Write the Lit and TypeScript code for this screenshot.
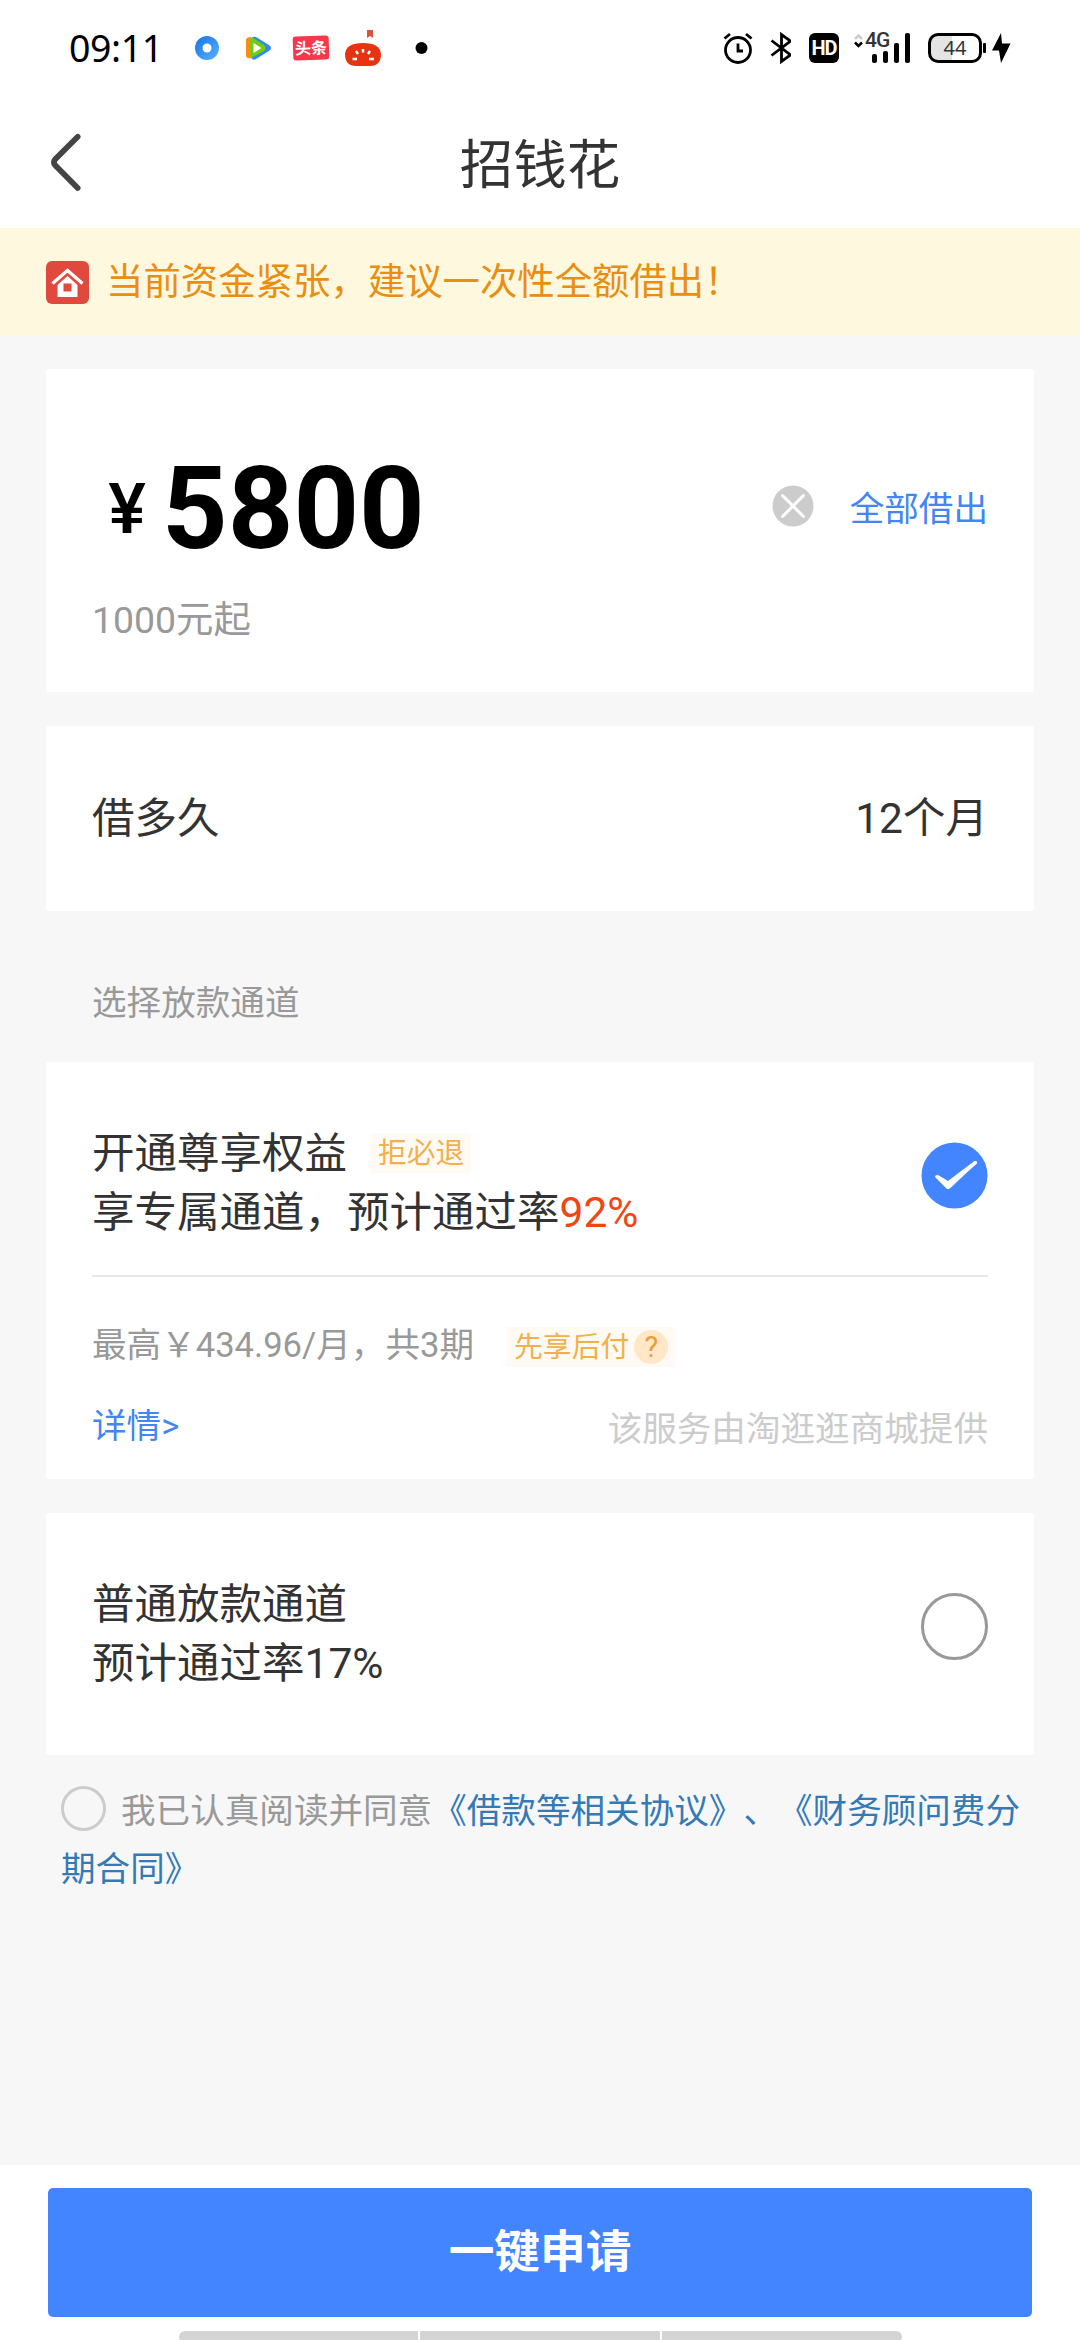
import { LitElement, html, css } from "lit";
import { customElement } from "lit/decorators.js";

@customElement("status-bar")
class StatusBar extends LitElement {
  static styles = css`
    :host { display: flex; align-items: center; height: 96px; padding: 0 68px 0 69px; justify-content: space-between; box-sizing: border-box; }
    .side { display: flex; align-items: center; }
    .time { width: 120px; font: 400 37.500px/46px "Noto Sans", sans-serif; letter-spacing: -0.400px; color: #000; }
    .play { margin-left: 6px; }
    .news { box-sizing: border-box; width: 36px; height: 24px; margin: 0 14px 0 20px; border-radius: 3px; background: #f6384d; color: #fff; font: 700 16px/22px "Noto Sans CJK SC", sans-serif; text-align: center; transform: rotate(-2deg); }
    svg { display: block; }
    .hd { width: 30px; height: 30px; border-radius: 6px; background: #000; color: #fff; font: 700 20px/31px Roboto, sans-serif; text-align: center; letter-spacing: -1px; margin: 0 14px 0 18px; }
    .signal { position: relative; width: 58px; height: 32px; }
    .net { position: absolute; left: 12px; top: -2px; font: 500 21px/20px Roboto, sans-serif; letter-spacing: -1px; }
    .battery { box-sizing: border-box; width: 54px; height: 30px; margin-left: 17px; border: 3px solid #000; border-radius: 10px; background: linear-gradient(90deg, #e4e4e4 44%, #fff 44%); font: 400 20px/24px "Noto Sans", sans-serif; text-align: center; }
  `;
  render() {
    return html`
      <div class="side">
        <div class="time">09:11</div>
        <svg width="36" height="30" viewBox="0 0 36 30">
          <defs><linearGradient id="a" x1="0" y1="0" x2="1" y2="1"><stop offset="0" stop-color="#1673e8" /><stop offset="1" stop-color="#58b3fb" /></linearGradient></defs>
          <circle cx="18" cy="15" r="12" fill="url(#a)" /><circle cx="18" cy="15" r="4.5" fill="#fff" />
        </svg>
        <svg class="play" width="42" height="30" viewBox="0 0 42 30">
          <path d="M25 4 L38 12 Q42 15 38 18 L25 26 Q21 28 20 24 V6 Q21 3 25 4Z" fill="#2f8fe8" />
          <path d="M20 4 V25 Q15 26 15 22 V7 Q15 4 20 4Z" fill="#ff8a17" />
          <path d="M19 7 Q19 4 22 5 L33 12 Q36 15 33 18 L22 24 Q19 25 19 22Z" fill="#74cc0c" />
          <path d="M22.500 10 L30.500 15 L22.500 20Z" fill="#fff" />
        </svg>
        <div class="news">头条</div>
        <svg width="40" height="40" viewBox="0 0 40 40">
          <path d="M24 2 H30 V10 L27 8 L24 10Z" fill="#db5439" />
          <path d="M2 26 Q3 15 20 15 Q37 15 38 26 Q38 38 27 38 H13 Q2 38 2 26Z" fill="#e5340f" />
          <g stroke="#fff" stroke-width="2.500"><path d="M20 21V24.500M13 23L15 26M27 23L25 26M9.500 31H14M26 31H31" /></g>
        </svg>
        <svg width="76" height="20" viewBox="0 0 76 20"><circle cx="38.500" cy="10" r="6" /></svg>
      </div>
      <div class="side">
        <svg width="30" height="32" viewBox="0 0 30 32" fill="none" stroke="#000" stroke-width="2.800">
          <circle cx="15" cy="18" r="12.500" /><path d="M15 11.500V19H20" /><path d="M1.500 6.500L7 2M28.500 6.500L23 2" />
        </svg>
        <svg width="38" height="32" viewBox="0 0 38 32" fill="none" stroke="#000" stroke-width="2.800">
          <path d="M18.500 8.500L37.500 23L28.500 29.500V2.500L37.500 9L18.500 23.500" />
        </svg>
        <div class="hd">HD</div>
        <div class="signal">
          <svg width="58" height="32" viewBox="0 0 58 32">
            <path d="M2 7L5.500 3.500L9 7" fill="none" stroke="#ccc" stroke-width="2.500" /><path d="M2 10.500L5.500 14L9 10.500" fill="none" stroke="#000" stroke-width="2.500" />
            <rect x="19" y="22" width="5" height="9" rx="2" /><rect x="30" y="19" width="5" height="12" rx="2" /><rect x="41" y="11" width="5" height="20" rx="2" /><rect x="52" y="1" width="5" height="30" rx="2" />
          </svg>
          <span class="net">4G</span>
        </div>
        <div class="battery">44</div>
        <svg width="30" height="32" viewBox="0 0 30 32"><rect x="1" y="11" width="3" height="10" rx="1" /><path d="M19 1L10 18.500H17L19 31L28.500 11.500H20Z" /></svg>
      </div>`;
  }
}

@customElement("app-root")
class AppRoot extends LitElement {
  static styles = css`
    :host { display: flex; flex-direction: column; box-sizing: border-box; height: 2340px; overflow: hidden; background: #f7f7f7; color: #333; font: 400 34.600px/50px Roboto, "Noto Sans CJK SC", sans-serif; text-spacing-trim: space-all; }
    svg { display: block; flex: none; }
    .top { background: #fff; height: 228px; }
    .title-bar { display: grid; grid-template-columns: 60px 1fr 60px; align-items: center; height: 132px; padding: 0 36px; }
    h1 { margin: 7px 0 0; font-size: 53.500px; font-weight: 400; line-height: 70px; text-align: center; }
    .notice { display: flex; align-items: center; height: 108px; padding: 0 46px; gap: 17px; background: #fef8df; color: #e98e10; font-size: 37.400px; }
    .content { display: flex; flex-direction: column; padding: 33px 46px 0; flex: 1; }
    .card { background: #fff; border-radius: 3px; box-sizing: border-box; padding: 0 46px; }
    .amount { height: 323px; padding-top: 94px; }
    .amount-row { display: flex; align-items: center; height: 92px; color: #000; }
    .yen { width: 70px; text-align: center; font-size: 71px; font-weight: 500; line-height: 92px; }
    .value { font-size: 114.500px; font-weight: 700; line-height: 92px; flex: 1; }
    .clear { margin-top: -6px; }
    .all { color: #4285f4; margin-left: 36px; }
    .minimum { margin-top: 40px; color: #999; font-size: 37.400px; }
    .period { display: flex; align-items: center; justify-content: space-between; margin-top: 34px; height: 185px; font-size: 42.500px; }
    .section { margin: 67px 46px 34px; color: #999; }
    .vip { height: 417px; }
    .choice { display: flex; align-items: center; justify-content: space-between; }
    .vip .choice { height: 213px; padding-top: 28px; box-sizing: border-box; }
    .check { margin-top: -15px; }
    .lines { font-size: 42.500px; line-height: 59px; }
    .line { display: flex; align-items: center; }
    .tag { display: flex; align-items: center; height: 40px; padding: 0 7px; margin-left: 24px; background: #fffaf3; color: #f1b04c; font-size: 28.800px; line-height: 40px; }
    .rate { color: #f04614; }
    .plan { display: flex; align-items: center; height: 50px; margin-top: 45px; color: #999; }
    .terms { margin-top: -5px; }
    .rule { height: 2px; background: #e8e8e8; }
    .plan .tag { margin-left: 33px; }
    .help { width: 34px; height: 34px; margin-left: 5px; border-radius: 50%; background: #ffe7c8; color: #eb9c3c; font-size: 29px; line-height: 35px; text-align: center; }
    .provider { display: flex; align-items: flex-start; justify-content: space-between; margin-top: 29px; color: #ccc; }
    .source { margin-top: 3px; }
    .details { color: #4285f4; }
    .normal { margin-top: 34px; height: 242px; }
    .normal .choice { height: 242px; }
    .radio { box-sizing: border-box; width: 67px; height: 67px; border: 3px solid #999; border-radius: 50%; margin-top: -15px; }
    .agreement { margin: 28px 0 0 15px; width: 970px; color: #999; line-height: 57.500px; }
    .box { display: inline-block; box-sizing: border-box; width: 45px; height: 45px; margin-right: 15px; border: 3px solid #ccc; border-radius: 50%; vertical-align: -8px; line-height: 0; }
    .link { color: #337ab7; }
    footer { display: flex; flex-direction: column; align-items: center; box-sizing: border-box; height: 175px; padding-top: 23px; background: #fff; }
    button { flex: none; width: 984px; height: 129px; padding: 0; border: 0; border-radius: 5px; background: #4285ff; color: #fff; font: 700 45.700px/60px Roboto, "Noto Sans CJK SC", sans-serif; }
    .nav { flex: none; display: flex; gap: 2px; margin-top: 14px; width: 723px; height: 12px; border-radius: 6px; overflow: hidden; }
    .nav i { flex: 1; background: #d4d4d4; }
  `;
  render() {
    return html`
      <div class="top">
        <status-bar></status-bar>
        <div class="title-bar">
          <svg width="60" height="70" viewBox="0 0 60 70"><path d="M41.700 9.700L19 32.500Q16.800 35.200 19 38L41.700 61" fill="none" stroke="#444" stroke-width="5.700" stroke-linecap="round" /></svg>
          <h1>招钱花</h1>
        </div>
      </div>
      <div class="notice">
        <svg width="43" height="43" viewBox="0 0 43 43"><rect width="43" height="43" rx="6" fill="#e0493d" /><path d="M11.500 24L21.500 15L31.500 24V36H11.500Z" fill="#fff" /><path d="M6 24L21.500 11L37 24" fill="none" stroke="#e0493d" stroke-width="5" /><path d="M6.500 22.500L21.500 9.500L36.500 22.500" fill="none" stroke="#fff" stroke-width="3.300" /><rect x="17.500" y="22.500" width="8" height="8" fill="#e0493d" /></svg>
        <span>当前资金紧张，建议一次性全额借出！</span>
      </div>
      <main class="content">
        <section class="card amount">
          <div class="amount-row">
            <span class="yen">¥</span><span class="value">5800</span>
            <svg class="clear" width="42" height="42" viewBox="0 0 42 42"><circle cx="21" cy="21" r="20.500" fill="#ccc" /><path d="M10.500 10.500L31.500 31.500M31.500 10.500L10.500 31.500" stroke="#fff" stroke-width="3" stroke-linecap="round" /></svg>
            <span class="all">全部借出</span>
          </div>
          <div class="minimum">1000元起</div>
        </section>
        <section class="card period"><span>借多久</span><span>12个月</span></section>
        <div class="section">选择放款通道</div>
        <section class="card vip">
          <div class="choice">
            <div class="lines">
              <div class="line">开通尊享权益<span class="tag">拒必退</span></div>
              <div>享专属通道，预计通过率<span class="rate">92%</span></div>
            </div>
            <svg class="check" width="67" height="67" viewBox="0 0 67 67"><circle cx="33.500" cy="33.500" r="33" fill="#4285ff" /><path d="M14 35Q14.500 32 18 33.500L27 39Q42 27.500 53.500 19Q57 18.500 56 21.500Q45 31 29.500 46Q27.500 48 25.500 46.500Z" fill="#fff" /></svg>
          </div>
          <div class="rule"></div>
          <div class="plan"><span class="terms">最高￥434.96/月，共3期</span><span class="tag">先享后付<span class="help">?</span></span></div>
          <div class="provider"><span class="details">详情&gt;</span><span class="source">该服务由淘逛逛商城提供</span></div>
        </section>
        <section class="card normal">
          <div class="choice">
            <div class="lines"><div>普通放款通道</div><div>预计通过率17%</div></div>
            <div class="radio"></div>
          </div>
        </section>
        <div class="agreement"><span class="box"></span>我已认真阅读并同意<span class="link">《借款等相关协议》、《财务顾问费分期合同》</span></div>
      </main>
      <footer><button>一键申请</button><div class="nav"><i></i><i></i><i></i></div></footer>`;
  }
}
